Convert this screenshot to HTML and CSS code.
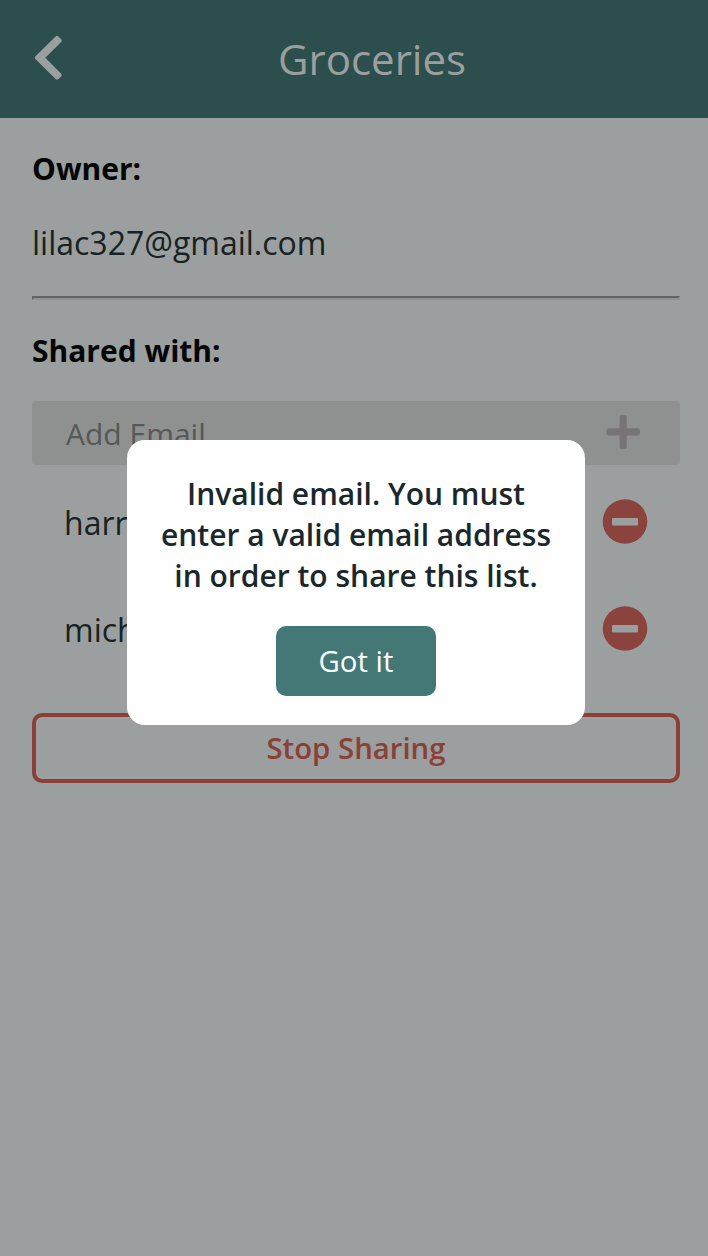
FILE: index.html
```html
<!DOCTYPE html>
<html lang="en">
<head>
<meta charset="utf-8">
<title>Groceries</title>
<link rel="stylesheet" href="styles.css">
</head>
<body>
<header class="header">
  <svg class="back" viewBox="0 0 28 45" width="28" height="45"><path d="M21.6 1.5Q23 .2 24.4 1.5L27.2 4.3Q28.4 5.6 27.2 7L11.3 22.8 27.2 38.7Q28.4 40 27.2 41.4L24.4 44.1Q23 45.3 21.6 44.1L1.3 24Q.2 22.8 1.3 21.6Z" fill="currentColor"/></svg>
  <h1 class="title">Groceries</h1>
</header>
<main class="content">
  <h2 class="label">Owner:</h2>
  <p class="owner">lilac327@gmail.com</p>
  <hr class="divider">
  <h2 class="label">Shared with:</h2>
  <div class="add">
    <span class="placeholder">Add Email</span>
    <svg class="plus" viewBox="0 0 34 34" width="34" height="34"><rect x="13.5" y="0" width="7.3" height="34" rx="2.3"/><rect x="0.7" y="13.3" width="33.3" height="7.3" rx="2.3"/></svg>
  </div>
  <ul class="people">
    <li class="person"><span class="name">harr</span>
      <svg class="remove" viewBox="0 0 45 45" width="45" height="45"><circle cx="22" cy="22.5" r="22.3"/><rect class="bar" x="9" y="19" width="26" height="7.5" rx="1"/></svg></li>
    <li class="person"><span class="name">mich</span>
      <svg class="remove" viewBox="0 0 45 45" width="45" height="45"><circle cx="22" cy="22.5" r="22.3"/><rect class="bar" x="9" y="19" width="26" height="7.5" rx="1"/></svg></li>
  </ul>
  <button class="stop">Stop Sharing</button>
</main>
<div class="modal" role="alertdialog">
  <p class="message">Invalid email. You must<br>enter a valid email address<br>in order to share this list.</p>
  <button class="confirm">Got it</button>
</div>
</body>
</html>
```
FILE: styles.css
```css
* { box-sizing: border-box; }
body {
  margin: 0;
  min-height: 1256px;
  background: #9b9f9f;
  color: #182222;
  font-family: "Open Sans", "Noto Sans", sans-serif;
  font-size: 32px;
}
h1, h2, p, ul { margin: 0; padding: 0; }
button { font-family: inherit; padding: 0; }
svg { display: block; flex: none; overflow: visible; }
.header {
  display: flex;
  align-items: center;
  height: 118px;
  padding: 0 34px;
  background: #2c4f4d;
  color: #9b9f9f;
}
.back { margin-top: -3px; }
.title {
  flex: 1;
  padding-left: 8px;
  text-align: center;
  font-size: 42px;
  font-weight: 400;
  line-height: 58px;
}
.content { padding: 30px 28px 0 32px; }
.label {
  color: #040606;
  font-size: 30px;
  font-weight: 700;
  line-height: 42px;
}
.owner { margin-top: 31px; line-height: 44px; }
.divider {
  height: 4px;
  margin: 31px 0 30px;
  border: 2px solid;
  border-color: #626464 #8e9191 #8e9191 #626464;
}
.add {
  display: flex;
  align-items: center;
  justify-content: space-between;
  height: 64px;
  margin-top: 29px;
  padding: 0 40px 0 34px;
  border-radius: 4px;
  background: #8f9190;
}
.placeholder { color: #555857; font-size: 30px; }
.plus { margin-top: -2px; fill: #767476; }
.people { list-style: none; padding: 3px 32px 0; }
.person {
  display: flex;
  align-items: center;
  justify-content: space-between;
  height: 107px;
}
.name { padding-top: 2px; }
.remove { fill: #8b443d; }
.remove .bar { fill: #9b9f9f; }
.stop {
  display: block;
  width: 100%;
  height: 70px;
  margin-top: 31px;
  border: 4px solid #8b4037;
  border-radius: 10px;
  background: transparent;
  color: #8b4037;
  font-size: 29.33px;
  font-weight: 600;
}
.modal {
  position: absolute;
  top: 440px;
  left: 127px;
  width: 458px;
  height: 285px;
  padding-top: 33px;
  border-radius: 18px;
  background: #fefefe;
  color: #1b282b;
  text-align: center;
}
.message { font-size: 30px; font-weight: 600; line-height: 41px; }
.confirm {
  width: 160px;
  height: 70px;
  margin-top: 30px;
  border: 0;
  border-radius: 10px;
  background: #437877;
  color: #fff;
  font-size: 29.33px;
}
```
